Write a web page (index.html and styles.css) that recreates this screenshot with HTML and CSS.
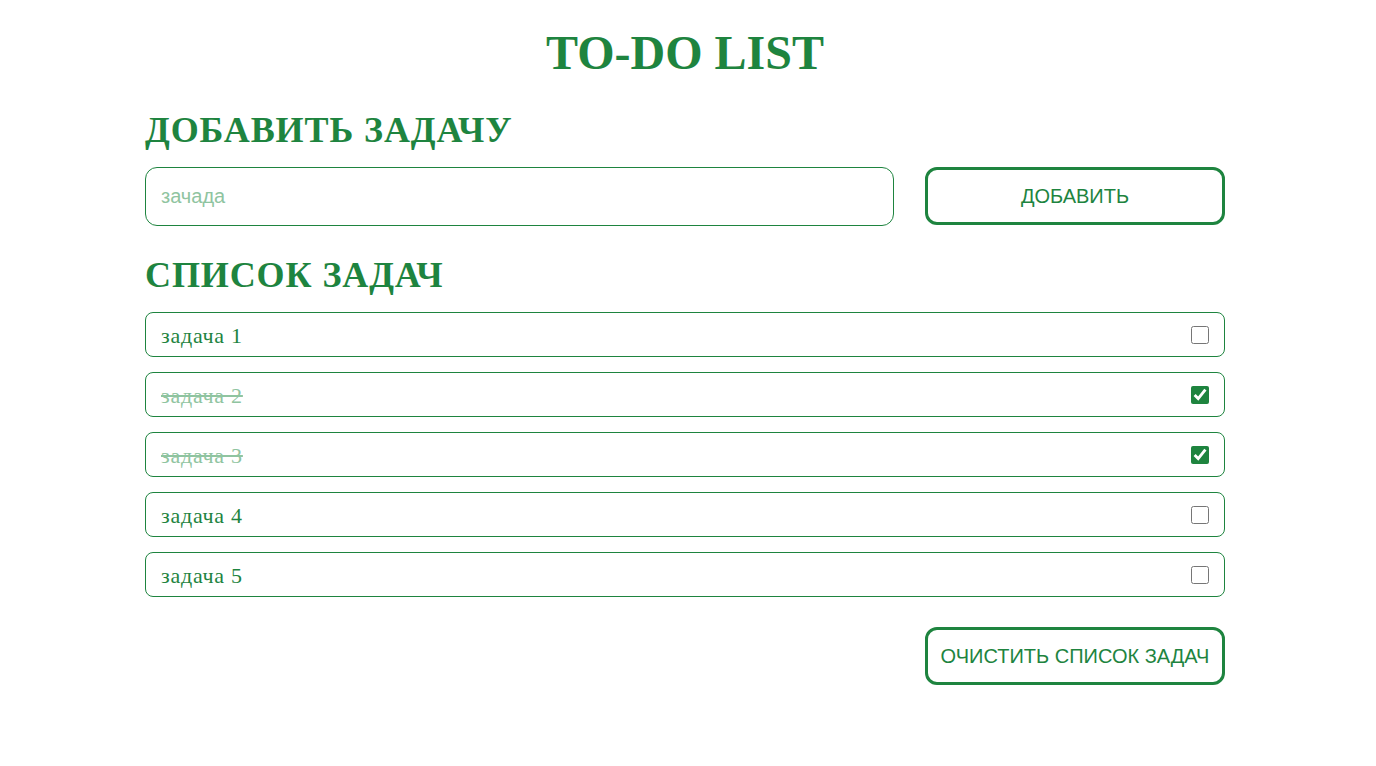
FILE: index.html
```html
<!DOCTYPE html>
<html lang="ru">
<head>
<meta charset="utf-8">
<title>TO-DO LIST</title>
<link rel="stylesheet" href="styles.css">
</head>
<body>
<main class="app">
  <h1 class="title">TO-DO LIST</h1>
  <h2 class="section-title section-title--add">ДОБАВИТЬ ЗАДАЧУ</h2>
  <form class="add-form">
    <input class="add-input" type="text" placeholder="зачада">
    <button class="btn" type="button">ДОБАВИТЬ</button>
  </form>
  <h2 class="section-title section-title--list">СПИСОК ЗАДАЧ</h2>
  <ul class="tasks">
    <li class="task"><span class="task-text">задача 1</span><input class="task-check" type="checkbox"></li>
    <li class="task task--done"><span class="task-text">задача 2</span><input class="task-check" type="checkbox" checked></li>
    <li class="task task--done"><span class="task-text">задача 3</span><input class="task-check" type="checkbox" checked></li>
    <li class="task"><span class="task-text">задача 4</span><input class="task-check" type="checkbox"></li>
    <li class="task"><span class="task-text">задача 5</span><input class="task-check" type="checkbox"></li>
  </ul>
  <div class="footer">
    <button class="btn" type="button">ОЧИСТИТЬ СПИСОК ЗАДАЧ</button>
  </div>
</main>
</body>
</html>
```

FILE: styles.css
```css
* { box-sizing: border-box; }

body {
  margin: 0;
  background: #ffffff;
  color: #1e843f;
  font-family: "Liberation Serif", "Times New Roman", serif;
}

.app {
  width: 1080px;
  margin: 0 auto 0 145px;
  padding-top: 26px;
}

.title {
  margin: 0;
  text-align: center;
  font-size: 48px;
  line-height: 53px;
  font-weight: bold;
}

.section-title {
  margin: 0;
  font-size: 36px;
  line-height: 40px;
  font-weight: bold;
  letter-spacing: 0.9px;
}

.section-title--add {
  margin-top: 31px;
  margin-bottom: 17px;
}

.section-title--list {
  margin-top: 29px;
  margin-bottom: 17px;
}

.add-form {
  display: flex;
  gap: 31px;
  margin: 0;
}

.add-input {
  flex: 1;
  height: 59px;
  border: 1px solid #1e843f;
  border-radius: 12px;
  padding: 0 15px;
  font-family: "Liberation Sans", Arial, sans-serif;
  font-size: 20px;
  color: #1e843f;
  outline: none;
}

.add-input::placeholder {
  color: #8fc4a0;
}

.btn {
  width: 300px;
  height: 58px;
  background: #ffffff;
  border: 3px solid #1e843f;
  border-radius: 12px;
  color: #1e843f;
  font-family: "Liberation Sans", Arial, sans-serif;
  font-size: 20px;
  padding: 0;
  cursor: pointer;
}

.tasks {
  list-style: none;
  margin: 0;
  padding: 0;
  display: flex;
  flex-direction: column;
  gap: 15px;
}

.task {
  display: flex;
  align-items: center;
  justify-content: space-between;
  height: 45px;
  border: 1px solid #1e843f;
  border-radius: 8px;
  padding: 0 15px;
}

.task-text {
  font-size: 22px;
  line-height: 25px;
  letter-spacing: 0.75px;
  padding-top: 1px;
}

.task--done .task-text {
  color: #8fc4a0;
  text-decoration: line-through;
}

.task-check {
  width: 18px;
  height: 18px;
  margin: 0;
  accent-color: #1e843f;
}

.footer {
  display: flex;
  justify-content: flex-end;
  margin-top: 30px;
}
```
